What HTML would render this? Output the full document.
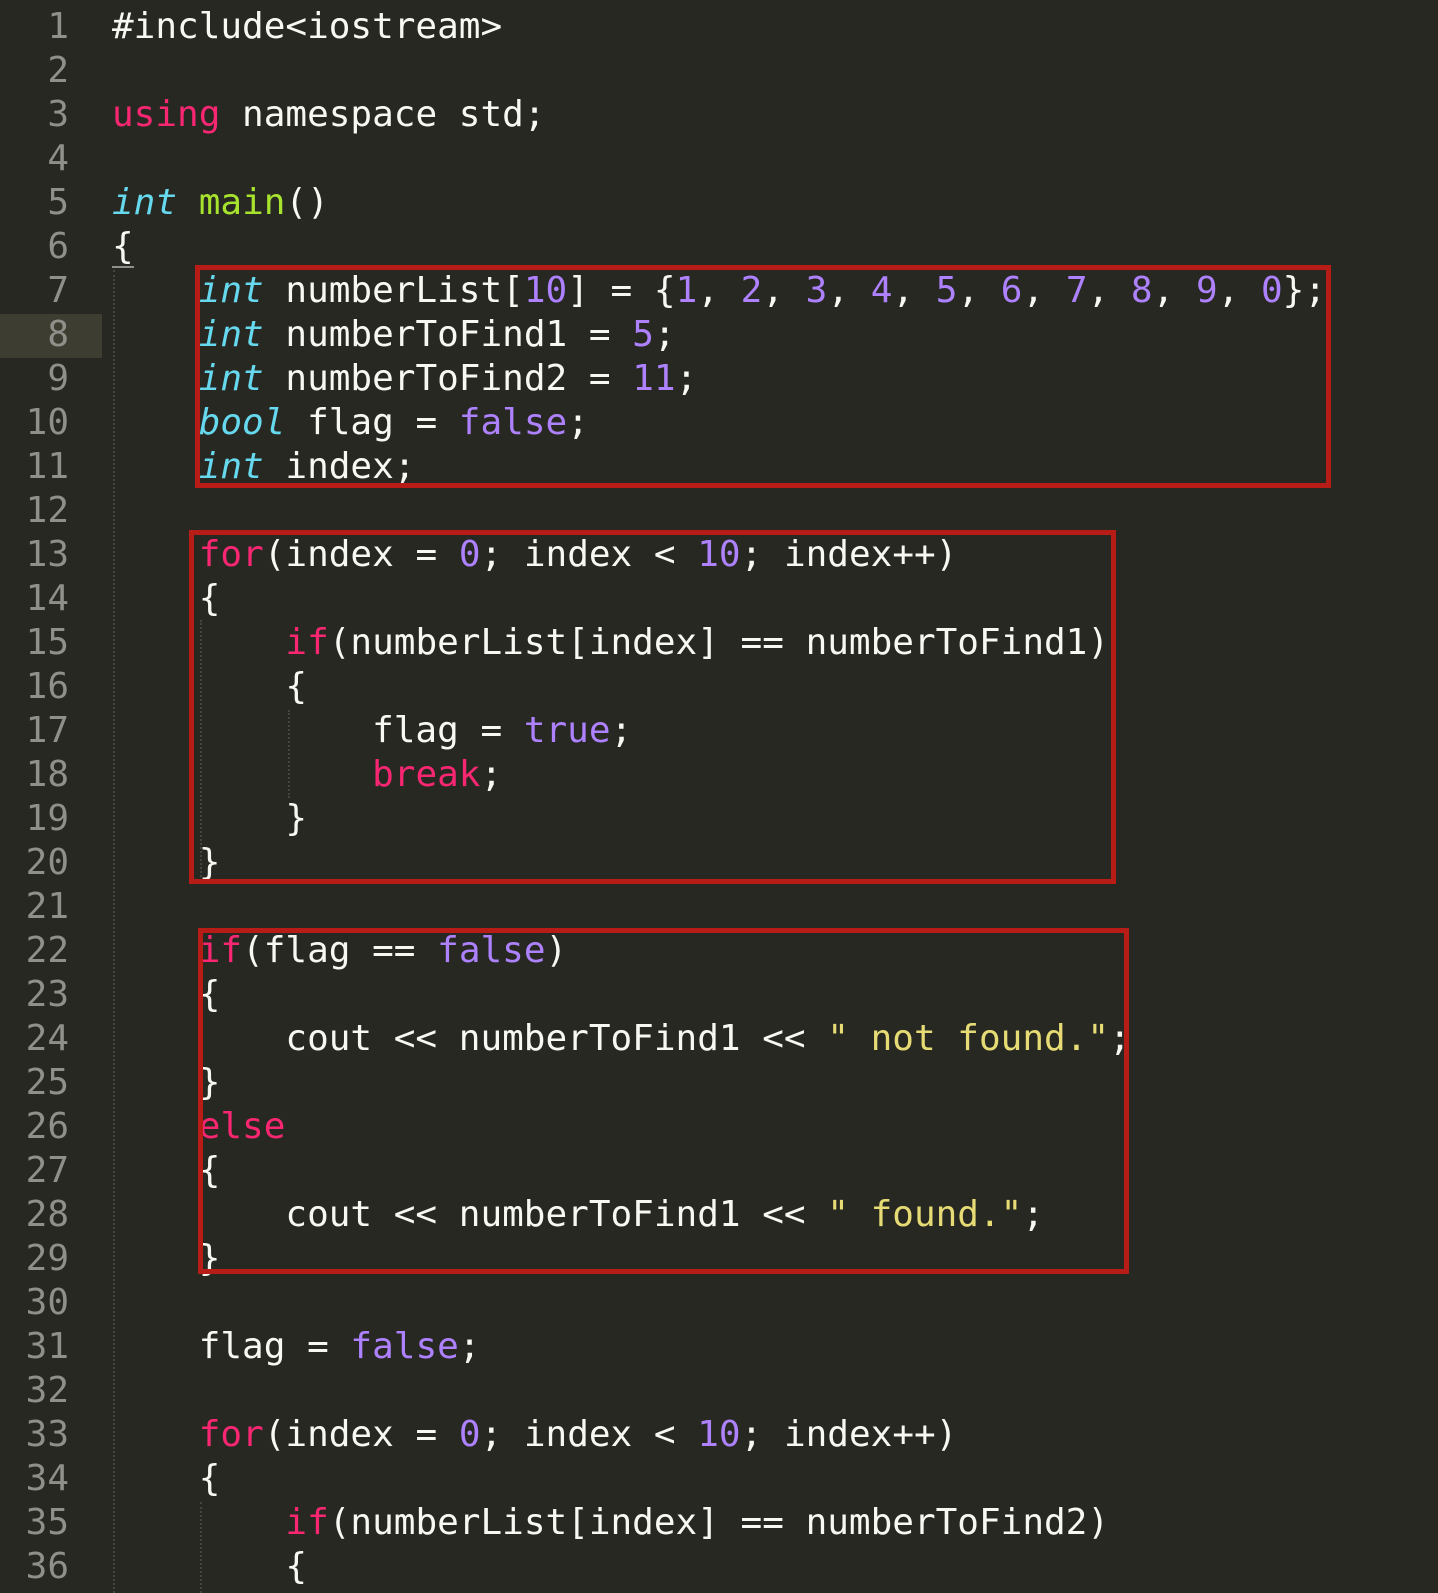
<!DOCTYPE html>
<html><head><meta charset="utf-8"><style>
html,body{margin:0;padding:0;background:#272822;width:1438px;height:1593px;overflow:hidden}
.hl{position:absolute;left:0;top:314px;width:102px;height:44px;background:#3e3d32}
.ln{position:absolute;left:0;width:69px;text-align:right;color:#8f908a}
.c{position:absolute;left:112px;white-space:pre;color:#f8f8f2}
.ln,.c{font-family:"DejaVu Sans Mono","Liberation Mono",monospace;font-size:36px;line-height:44px;height:44px}
.k{color:#f92672}.t{color:#66d9ef;font-style:italic}.n{color:#ae81ff}.f{color:#a6e22e}.s{color:#e6db74}
.box{position:absolute;border:5px solid #b81c16;box-sizing:border-box}
.gd{position:absolute;border-left:2px dotted #44453e;width:0}
</style></head><body>
<div class="hl"></div>
<div class="gd" style="left:113px;top:270px;height:1323px"></div>
<div class="gd" style="left:200px;top:620px;height:264px"></div>
<div class="gd" style="left:288px;top:710px;height:88px"></div>
<div class="gd" style="left:200px;top:1502px;height:91px"></div>
<div style="position:absolute;left:112px;top:266px;width:22px;height:2px;background:#8f908a"></div>
<div id="lines"></div>
<div class="box" style="left:195px;top:265px;width:1136px;height:223px"></div>
<div class="box" style="left:189px;top:530px;width:927px;height:354px"></div>
<div class="box" style="left:198px;top:928px;width:931px;height:346px"></div>
<script>
var L=[
'#include&lt;iostream&gt;','',
'<span class="k">using</span> namespace std;','',
'<span class="t">int</span> <span class="f">main</span>()','{',
'    <span class="t">int</span> numberList[<span class="n">10</span>] = {<span class="n">1</span>, <span class="n">2</span>, <span class="n">3</span>, <span class="n">4</span>, <span class="n">5</span>, <span class="n">6</span>, <span class="n">7</span>, <span class="n">8</span>, <span class="n">9</span>, <span class="n">0</span>};',
'    <span class="t">int</span> numberToFind1 = <span class="n">5</span>;',
'    <span class="t">int</span> numberToFind2 = <span class="n">11</span>;',
'    <span class="t">bool</span> flag = <span class="n">false</span>;',
'    <span class="t">int</span> index;','',
'    <span class="k">for</span>(index = <span class="n">0</span>; index &lt; <span class="n">10</span>; index++)',
'    {',
'        <span class="k">if</span>(numberList[index] == numberToFind1)',
'        {',
'            flag = <span class="n">true</span>;',
'            <span class="k">break</span>;',
'        }','    }','',
'    <span class="k">if</span>(flag == <span class="n">false</span>)',
'    {',
'        cout &lt;&lt; numberToFind1 &lt;&lt; <span class="s">" not found."</span>;',
'    }','    <span class="k">else</span>','    {',
'        cout &lt;&lt; numberToFind1 &lt;&lt; <span class="s">" found."</span>;',
'    }','',
'    flag = <span class="n">false</span>;','',
'    <span class="k">for</span>(index = <span class="n">0</span>; index &lt; <span class="n">10</span>; index++)',
'    {',
'        <span class="k">if</span>(numberList[index] == numberToFind2)',
'        {'];
var h='';
for(var i=0;i<L.length;i++){var y=(5+i*44).toFixed(1);
h+='<div class="ln" style="top:'+y+'px">'+(i+1)+'</div><div class="c" style="top:'+y+'px">'+L[i]+'</div>';}
document.getElementById('lines').innerHTML=h;
</script>
</body></html>
